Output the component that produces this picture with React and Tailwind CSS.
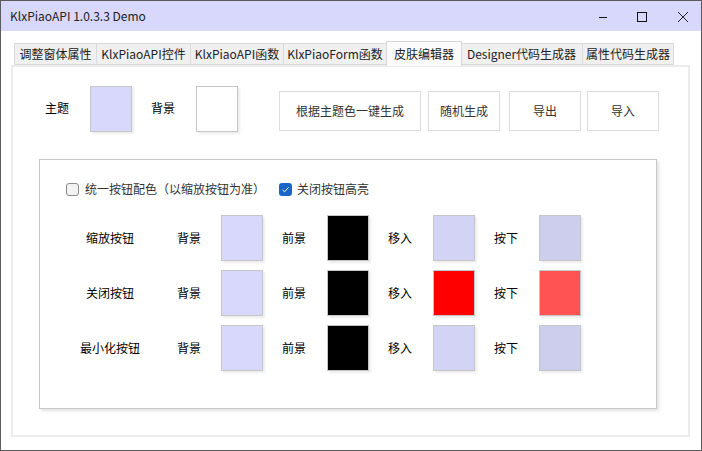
const FONT = { fontFamily: '"Microsoft YaHei", "Noto Sans CJK SC", "Noto Sans", sans-serif' };

const tabs = [
  { label: '调整窗体属性', w: 83 },
  { label: 'KlxPiaoAPI控件', w: 94 },
  { label: 'KlxPiaoAPI函数', w: 93 },
  { label: 'KlxPiaoForm函数', w: 103 },
  { label: '皮肤编辑器', w: 75, active: true },
  { label: 'Designer代码生成器', w: 122 },
  { label: '属性代码生成器', w: 91 },
];

const rows = [
  { name: '缩放按钮', hover: '#d3d3f5', down: '#cdcdee' },
  { name: '关闭按钮', hover: '#ff0000', down: '#ff5252' },
  { name: '最小化按钮', hover: '#d3d3f5', down: '#cdcdee' },
];

function Swatch({ color, className = '' }) {
  return (
    <div
      className={'w-[42px] h-[46px] shrink-0 border border-[#c6c6c6] shadow-[2px_2px_2px_rgba(0,0,0,0.08)] ' + className}
      style={{ backgroundColor: color }}
    />
  );
}

function Btn({ children, className = '' }) {
  return (
    <div className={'h-[40px] flex items-center justify-center border border-[#dcdcdc] bg-white text-[12px] text-[#333] ' + className}>
      {children}
    </div>
  );
}

export default function App() {
  return (
    <div className="w-[702px] h-[451px] border border-[#5b5b5b] bg-white flex flex-col overflow-hidden" style={FONT}>
      {/* title bar */}
      <div className="h-[30px] shrink-0 bg-[#d8d8fc] flex items-center">
        <span className="ml-[9px] text-[12px] text-[#222]">KlxPiaoAPI 1.0.3.3 Demo</span>
        <svg width="110" height="30" className="ml-auto">
          <line x1="8" y1="16.5" x2="16" y2="16.5" stroke="#111" strokeWidth="1" />
          <rect x="46.5" y="11.5" width="9" height="9" fill="none" stroke="#111" strokeWidth="1" />
          <path d="M87 11 L97 21 M97 11 L87 21" stroke="#222" strokeWidth="1" />
        </svg>
      </div>

      {/* tabs */}
      <div className="mt-[10px] ml-[13px] flex items-end h-[24px]">
        {tabs.map((t, i) =>
          t.active ? (
            <div
              key={t.label}
              className="h-[25px] -mb-[1px] -mx-[1px] relative z-10 flex items-center justify-center border border-b-0 border-[#d6d6d6] bg-[#fbfbfb] text-[12px] text-[#222]"
              style={{ width: t.w + 1 }}
            >
              {t.label}
            </div>
          ) : (
            <div
              key={t.label}
              className={
                'h-[22px] flex items-center justify-center border-y border-r border-[#dadada] bg-[#f0f0f0] text-[12px] text-[#222] ' +
                (i === 0 ? 'border-l' : '')
              }
              style={{ width: t.w }}
            >
              {t.label}
            </div>
          )
        )}
      </div>

      {/* tab page */}
      <div className="ml-[10px] w-[679px] h-[372px] border-2 border-[#ebebeb] bg-white">
        <div className="flex items-start pt-[19px]">
          <span className="ml-[32px] mt-[13px] text-[12px] text-black">主题</span>
          <Swatch color="#d8d8fc" className="ml-[21px]" />
          <span className="ml-[19px] mt-[13px] text-[12px] text-black">背景</span>
          <Swatch color="#ffffff" className="ml-[21px]" />
          <Btn className="ml-[41px] mt-[5px] w-[142px]">根据主题色一键生成</Btn>
          <Btn className="ml-[7px] mt-[5px] w-[72px]">随机生成</Btn>
          <Btn className="ml-[9px] mt-[5px] w-[72px]">导出</Btn>
          <Btn className="ml-[6px] mt-[5px] w-[72px]">导入</Btn>
        </div>

        <div className="ml-[26px] mt-[27px] w-[618px] h-[250px] border border-[#c8c8c8] shadow-[2px_2px_3px_rgba(0,0,0,0.12)] bg-white">
          <div className="flex items-center mt-[19px] h-[20px] text-[12px] text-[#333]">
            <div className="ml-[26px] w-[13px] h-[13px] rounded-[3px] border border-[#8a8a8a] bg-[#f3f3f3]" />
            <span className="ml-[6px]">统一按钮配色（以缩放按钮为准）</span>
            <div className="ml-[14px] w-[13px] h-[13px] rounded-[3px] bg-[#1a66c8] flex items-center justify-center">
              <svg width="9" height="9" viewBox="0 0 9 9">
                <path d="M1.5 4.8 L3.6 6.8 L7.5 2.4" fill="none" stroke="#fff" strokeWidth="1" />
              </svg>
            </div>
            <span className="ml-[5px]">关闭按钮高亮</span>
          </div>

          <div className="mt-[16px] flex flex-col gap-[9px]">
            {rows.map((r) => (
              <div key={r.name} className="flex items-center text-[12px] text-black">
                <span className="ml-[30px] w-[80px] text-center">{r.name}</span>
                <span className="ml-[27px]">背景</span>
                <Swatch color="#d8d8fc" className="ml-[20px]" />
                <span className="ml-[19px]">前景</span>
                <Swatch color="#000000" className="ml-[21px]" />
                <span className="ml-[19px]">移入</span>
                <Swatch color={r.hover} className="ml-[21px]" />
                <span className="ml-[19px]">按下</span>
                <Swatch color={r.down} className="ml-[21px]" />
              </div>
            ))}
          </div>
        </div>
      </div>
    </div>
  );
}
